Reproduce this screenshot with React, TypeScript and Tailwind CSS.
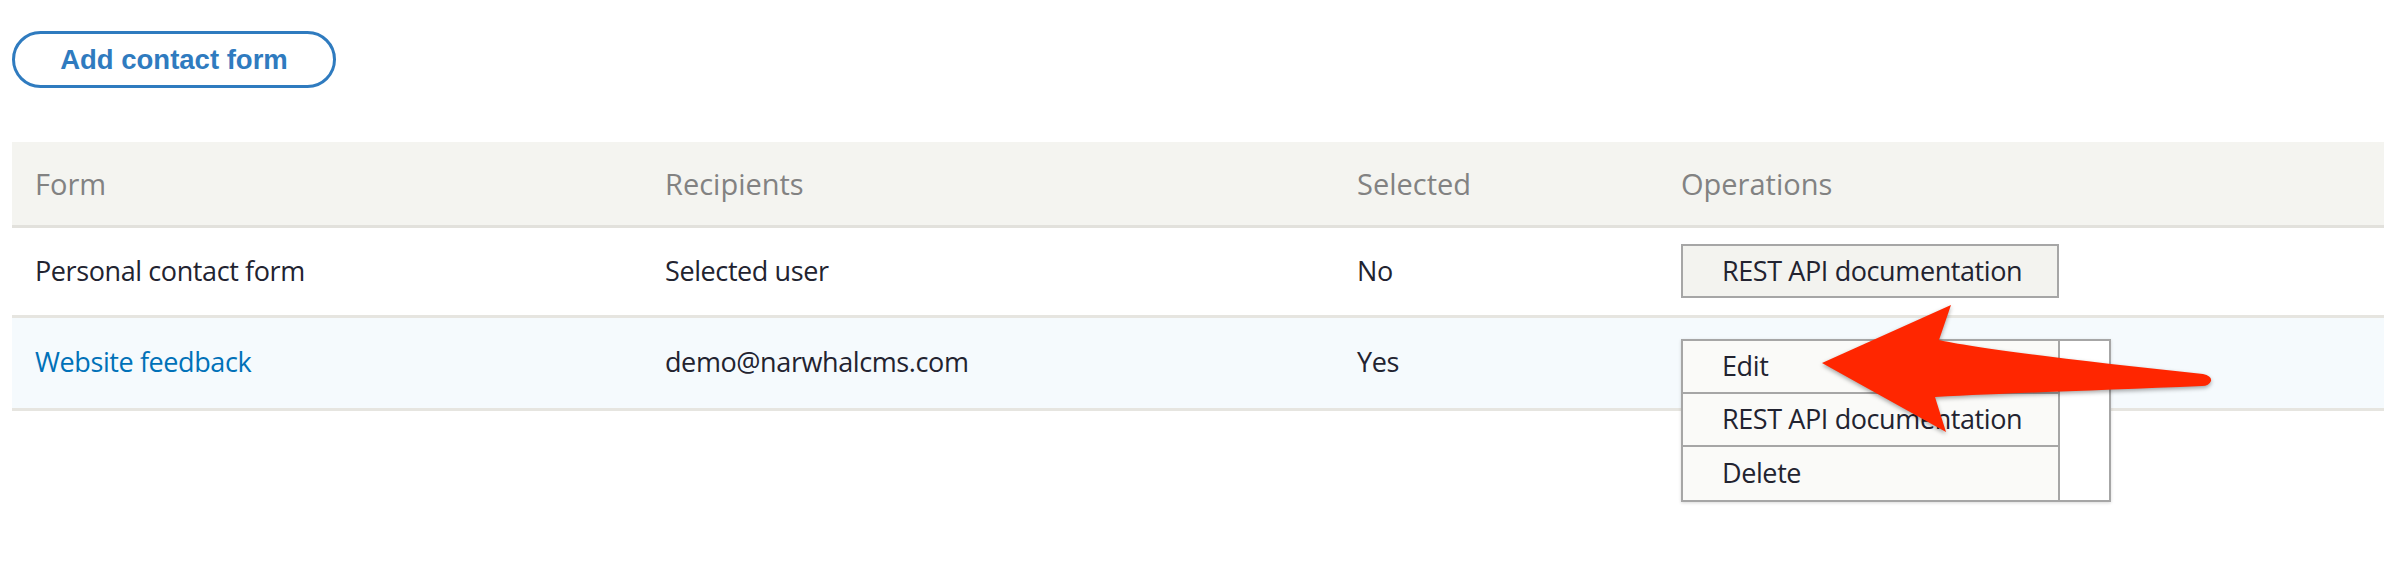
import React from 'react';

const rows = [
  { form: 'Personal contact form', link: false, recipients: 'Selected user', selected: 'No' },
  { form: 'Website feedback', link: true, recipients: 'demo@narwhalcms.com', selected: 'Yes' },
];

function Dropbutton() {
  return (
    <div className="absolute left-[23px] top-[21px] flex border-2 border-[#a6a6a6] bg-white shadow-[0_1px_3px_rgba(0,0,0,0.15)]">
      <ul className="w-[375px] bg-[#fafaf8]">
        {['Edit', 'REST API documentation', 'Delete'].map((item, i) => (
          <li
            key={item}
            className={`flex h-[53px] items-center pl-[39px] ${i < 2 ? 'border-b-2 border-[#a6a6a6]' : ''}`}
          >
            {item}
          </li>
        ))}
      </ul>
      <div className="relative w-[51px] border-l-2 border-[#a6a6a6] bg-white">
        <span className="absolute left-[20px] top-[21px] h-0 w-0 border-x-[5px] border-b-[6px] border-x-transparent border-b-[#333]" />
      </div>
    </div>
  );
}

function Arrow() {
  return (
    <svg
      className="pointer-events-none absolute left-[1800px] top-[290px] h-[160px] w-[420px] drop-shadow-[0_2px_2px_rgba(0,0,0,0.35)]"
      viewBox="1800 290 420 160"
    >
      <path
        d="M1822 363 L1951 305 L1939 340 C1985 350 2100 363 2203 374 Q2212 376 2211 381 Q2209 386 2202 386 C2110 390 2010 393 1935 397 L1946 432 Z"
        fill="#ff2600"
      />
    </svg>
  );
}

export default function App() {
  return (
    <div className="relative h-[576px] w-[2396px] overflow-hidden bg-white px-3 font-['Open_Sans',sans-serif] text-[27px] tracking-[-0.4px] text-[#222330]">
      <button className="mt-[31px] h-[57px] w-[324px] rounded-full border-[3px] border-[#2f7bbf] bg-white font-['Liberation_Sans',Arial,sans-serif] text-[27.5px] font-bold tracking-normal text-[#2f7bbf]">
        Add contact form
      </button>

      <table className="mt-[54px] w-full table-fixed border-collapse text-left">
        <colgroup>
          <col className="w-[630px]" />
          <col className="w-[692px]" />
          <col className="w-[324px]" />
          <col />
        </colgroup>
        <thead>
          <tr className="h-[84px] border-b-[3px] border-[#e2e1dc] bg-[#f4f4f0] text-[29px] tracking-normal text-[#828282]">
            <th className="pl-[23px] font-normal">Form</th>
            <th className="pl-[23px] font-normal">Recipients</th>
            <th className="pl-[23px] font-normal">Selected</th>
            <th className="pl-[23px] font-normal">Operations</th>
          </tr>
        </thead>
        <tbody>
          {rows.map((row, i) => (
            <tr
              key={row.form}
              className={`border-b-[3px] border-[#e6e5e0] ${i === 1 ? 'h-[93px] bg-[#f5fafd]' : 'h-[90px] bg-white'}`}
            >
              <td className="pl-[23px]">
                {row.link ? <span className="text-[#0071b8]">{row.form}</span> : row.form}
              </td>
              <td className="pl-[23px]">{row.recipients}</td>
              <td className="pl-[23px]">{row.selected}</td>
              <td className="relative pl-[23px]">
                {i === 0 ? (
                  <div className="flex h-[54px] w-[378px] items-center border-2 border-[#a6a6a6] bg-[#f3f3ef] pl-[39px]">
                    REST API documentation
                  </div>
                ) : (
                  <Dropbutton />
                )}
              </td>
            </tr>
          ))}
        </tbody>
      </table>

      <Arrow />
    </div>
  );
}
